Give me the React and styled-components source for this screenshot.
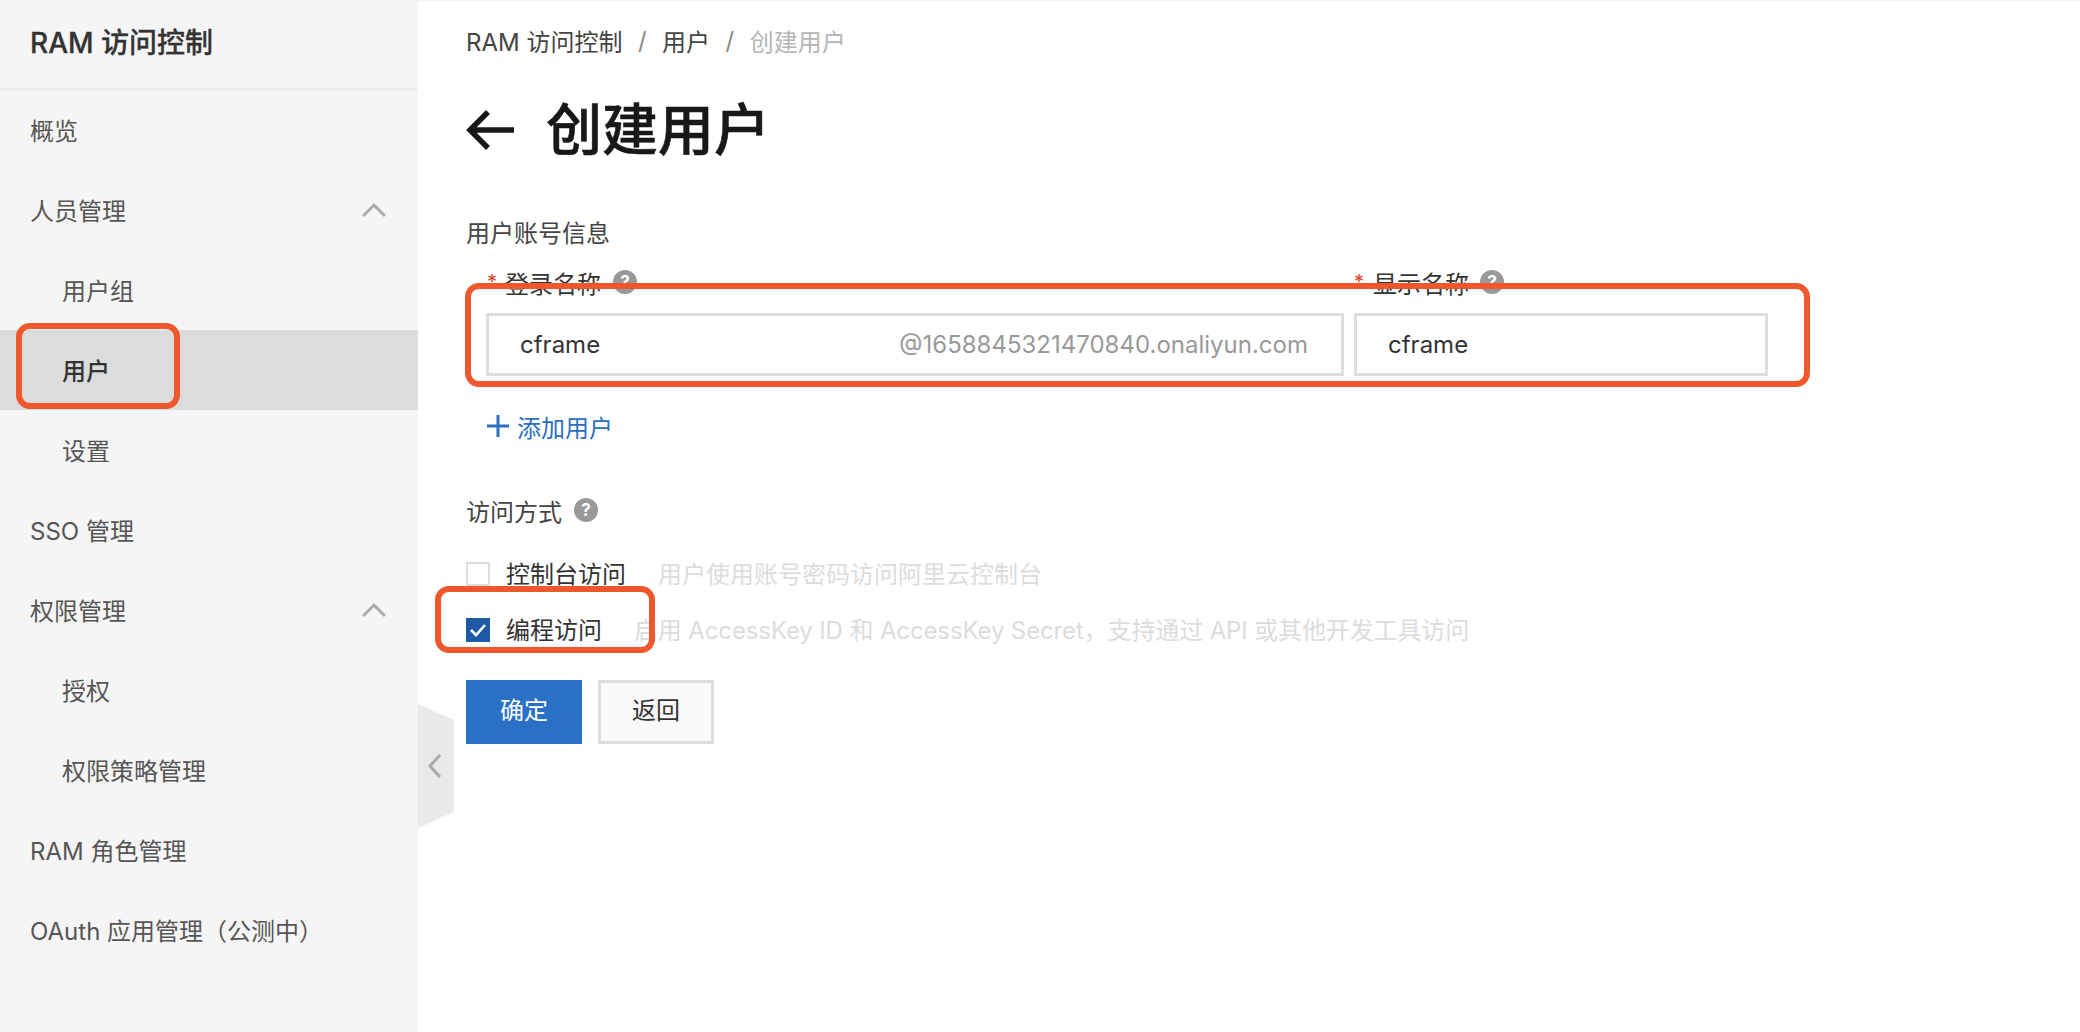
import React from 'react';
import styled, { createGlobalStyle } from 'styled-components';

const GlobalStyle = createGlobalStyle`
  html, body {
    margin: 0;
    padding: 0;
    background: #fff;
  }
  body {
    font-family: Inter, "Noto Sans CJK SC", "Noto Sans", sans-serif;
    color: #333;
  }
  * {
    box-sizing: border-box;
  }
`;

const Page = styled.div`
  position: relative;
  display: flex;
  width: 2080px;
  height: 1032px;
  overflow: hidden;
`;

const Sidebar = styled.aside`
  position: relative;
  flex: 0 0 418px;
  background: #f5f5f5;
`;

const SidebarTitle = styled.div`
  display: flex;
  align-items: center;
  height: 90px;
  padding: 0 0 6px 30px;
  border-bottom: 2px solid #ececec;
  font-size: 28px;
  font-weight: 500;
  -webkit-text-stroke: 0.3px #333;
  color: #333;
`;

const MenuItem = styled.div`
  display: flex;
  align-items: center;
  justify-content: space-between;
  height: 80px;
  padding: 0 32px 2px ${(p) => (p.$nested ? '62px' : '30px')};
  font-size: 24px;
  font-weight: ${(p) => (p.$active ? 500 : 400)};
  color: ${(p) => (p.$active ? '#333' : '#555')};
  background: ${(p) => (p.$active ? '#dcdcdc' : 'transparent')};

  svg {
    margin-top: 2px;
  }
`;

const Collapser = styled.div`
  position: absolute;
  left: 100%;
  top: 704px;
  display: flex;
  align-items: center;
  justify-content: flex-start;
  width: 36px;
  height: 124px;
  padding-left: 10px;
  background: #e9e9e9;
  clip-path: polygon(0 0, 100% 13%, 100% 87%, 0 100%);
`;

const Main = styled.main`
  flex: 1;
  padding-left: 48px;
  background: #fff;
  border-top: 1px solid #f4f4f4;
`;

const Breadcrumb = styled.nav`
  display: flex;
  align-items: center;
  gap: 15.5px;
  height: 81px;
  padding-bottom: 3px;
  font-size: 24px;
  color: #444;
`;

const Slash = styled.span`
  color: #888;
`;

const Current = styled.span`
  color: #b5b5b5;
`;

const Heading = styled.div`
  display: flex;
  align-items: center;
  gap: 32px;
  height: 96px;
`;

const HeadingText = styled.h1`
  margin: 0;
  font-size: 56px;
  line-height: 96px;
  font-weight: 500;
  -webkit-text-stroke: 0.6px #181818;
  color: #181818;
`;

const SectionTitle = styled.div`
  display: flex;
  align-items: center;
  gap: 12px;
  height: 32px;
  font-size: 24px;
  color: #444;
`;

const AccountTitle = styled(SectionTitle)`
  margin-top: 37px;
`;

const AccessTitle = styled(SectionTitle)`
  margin-top: 52px;
`;

const Fields = styled.div`
  display: grid;
  grid-template-columns: 858px 414px;
  column-gap: 10px;
  margin: 19px 0 0 20px;
`;

const FieldLabel = styled.div`
  display: flex;
  align-items: center;
  height: 32px;
  font-size: 24px;
  color: #333;
`;

const Star = styled.span`
  flex: 0 0 19px;
  padding-left: ${(p) => (p.$tight ? '0' : '1px')};
  font-size: 20px;
  line-height: 20px;
  color: #e0402a;
`;

const Help = styled.span`
  display: inline-flex;
  align-items: center;
  justify-content: center;
  width: 24px;
  height: 24px;
  margin-left: ${(p) => p.$gap || '12px'};
  border-radius: 50%;
  background: #999;
  color: #fff;
  font-size: 17px;
  font-weight: 700;
  line-height: 1;
`;

const InputBox = styled.div`
  display: flex;
  align-items: center;
  justify-content: space-between;
  height: 63px;
  margin-top: 15px;
  padding: 0 33px 0 31px;
  border: 3px solid #dedede;
  font-size: 24px;
  color: #333;
`;

const Suffix = styled.span`
  color: #999;
`;

const AddUser = styled.div`
  display: flex;
  align-items: center;
  gap: 8px;
  height: 32px;
  margin: 34px 0 0 21px;
  font-size: 24px;
  color: #2a6fc0;
`;

const CheckRow = styled.div`
  display: flex;
  align-items: center;
  height: 32px;
  margin-top: ${(p) => p.$top};
  padding-bottom: 4px;
  font-size: 24px;
  color: #333;
`;

const Check = styled.span`
  display: flex;
  align-items: center;
  justify-content: center;
  flex: 0 0 24px;
  height: 24px;
  margin: 4px 16px 0 0;
  border: ${(p) => (p.$checked ? 'none' : '2px solid #dedede')};
  background: ${(p) => (p.$checked ? '#1f5aa6' : '#fff')};
`;

const Hint = styled.span`
  margin-left: 32px;
  letter-spacing: ${(p) => p.$tracking || 0};
  color: #dcdcdc;
`;

const Actions = styled.div`
  display: flex;
  gap: 16px;
  margin-top: 34px;
`;

const Button = styled.button`
  width: 116px;
  height: 64px;
  padding: 0 0 8px;
  font: inherit;
  font-size: 24px;
  border: ${(p) => (p.$primary ? 'none' : '3px solid #dedede')};
  background: ${(p) => (p.$primary ? '#2a70c5' : '#f9f9f9')};
  color: ${(p) => (p.$primary ? '#fff' : '#333')};
`;

// red annotation boxes drawn over the screenshot
const Mark = styled.div`
  position: absolute;
  left: ${(p) => p.$x}px;
  top: ${(p) => p.$y}px;
  width: ${(p) => p.$w}px;
  height: ${(p) => p.$h}px;
  border: 6px solid #ee582c;
  border-radius: 14px;
  pointer-events: none;
`;

const Chevron = ({ up }) => (
  <svg width="24" height="16" viewBox="0 0 24 16" fill="none">
    <polyline points={up ? '1,14 12,3 23,14' : '1,3 12,14 23,3'} stroke="#aaa" strokeWidth="3" />
  </svg>
);

const menu = [
  { label: '概览' },
  { label: '人员管理', open: true },
  { label: '用户组', nested: true },
  { label: '用户', nested: true, active: true },
  { label: '设置', nested: true },
  { label: 'SSO 管理' },
  { label: '权限管理', open: true },
  { label: '授权', nested: true },
  { label: '权限策略管理', nested: true },
  { label: 'RAM 角色管理' },
  { label: 'OAuth 应用管理（公测中）' },
];

const App = () => (
  <Page>
    <GlobalStyle />
    <Sidebar>
      <SidebarTitle>RAM 访问控制</SidebarTitle>
      {menu.map((item) => (
        <MenuItem key={item.label} $nested={item.nested} $active={item.active}>
          {item.label}
          {item.open && <Chevron up />}
        </MenuItem>
      ))}
      <Collapser>
        <svg width="14" height="24" viewBox="0 0 14 24" fill="none">
          <polyline points="12,1 2,12 12,23" stroke="#aaa" strokeWidth="3" />
        </svg>
      </Collapser>
    </Sidebar>

    <Main>
      <Breadcrumb>
        <span>RAM 访问控制</span>
        <Slash>/</Slash>
        <span>用户</span>
        <Slash>/</Slash>
        <Current>创建用户</Current>
      </Breadcrumb>

      <Heading>
        <svg width="48" height="40" viewBox="0 0 48 40" fill="none">
          <path d="M48 20H4M22 2L4 20l18 18" stroke="#181818" strokeWidth="5.5" />
        </svg>
        <HeadingText>创建用户</HeadingText>
      </Heading>

      <AccountTitle>用户账号信息</AccountTitle>

      <Fields>
        <FieldLabel>
          <Star>*</Star>登录名称<Help>?</Help>
        </FieldLabel>
        <FieldLabel>
          <Star $tight>*</Star>显示名称<Help $gap="11px">?</Help>
        </FieldLabel>
        <InputBox>
          cframe
          <Suffix>@1658845321470840.onaliyun.com</Suffix>
        </InputBox>
        <InputBox>cframe</InputBox>
      </Fields>

      <AddUser>
        <svg width="22" height="22" viewBox="0 0 22 22" fill="none">
          <path d="M11 0v22M0 11h22" stroke="#2a6fc0" strokeWidth="3" />
        </svg>
        添加用户
      </AddUser>

      <AccessTitle>
        访问方式<Help $gap="0">?</Help>
      </AccessTitle>

      <CheckRow $top="32px">
        <Check />
        控制台访问
        <Hint>用户使用账号密码访问阿里云控制台</Hint>
      </CheckRow>
      <CheckRow $top="24px">
        <Check $checked>
          <svg width="18" height="14" viewBox="0 0 18 14" fill="none">
            <path d="M2 7l5 5 9-10" stroke="#fff" strokeWidth="2.6" />
          </svg>
        </Check>
        编程访问
        <Hint $tracking="-0.13px">启用 AccessKey ID 和 AccessKey Secret，支持通过 API 或其他开发工具访问</Hint>
      </CheckRow>

      <Actions>
        <Button $primary>确定</Button>
        <Button>返回</Button>
      </Actions>
    </Main>

    <Mark $x={16} $y={323} $w={164} $h={86} />
    <Mark $x={465} $y={283} $w={1345} $h={104} />
    <Mark $x={435} $y={586} $w={220} $h={67} />
  </Page>
);

export default App;
